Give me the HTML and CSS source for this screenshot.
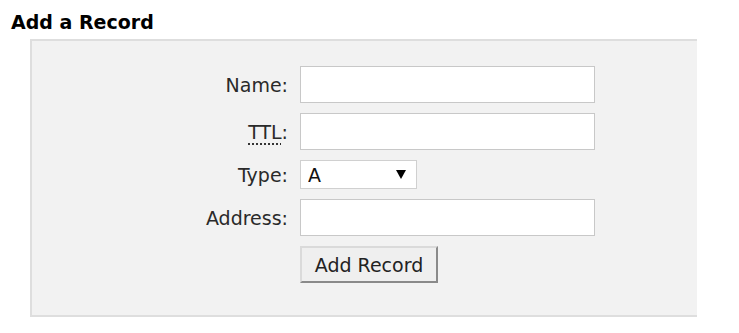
FILE: index.html
```html
<html>
<head>
   <link rel="stylesheet" href="styles.css">
</head>
<body>
   <h3 class="title">Add a Record</h3>
   <form class="record-form" onsubmit="return false;">
      <div class="form-grid">
         <label for="rec-name">Name:</label>
         <input type="text" id="rec-name" class="field">

         <label for="rec-ttl"><abbr title="Time to live">TTL</abbr>:</label>
         <input type="text" id="rec-ttl" class="field">

         <label for="rec-type">Type:</label>
         <div class="select-wrap">
            <select id="rec-type" class="type-select">
               <option>A</option>
               <option>AAAA</option>
               <option>CNAME</option>
               <option>MX</option>
               <option>TXT</option>
            </select>
         </div>

         <label for="rec-address">Address:</label>
         <input type="text" id="rec-address" class="field">

         <span></span>
         <div><button type="submit" class="add-btn">Add Record</button></div>
      </div>
   </form>
</body>
</html>
```

FILE: styles.css
```css
body {
   margin: 0;
   padding: 0 8px 0 11px;
   background-color: #fff;
   color: #222;
   font-family: "DejaVu Sans", Verdana, sans-serif;
   font-size: 19px;
}
.title {
   margin: 11px 0 6px 0;
   font-size: 19px;
   font-weight: bold;
   color: #000;
}
.record-form {
   margin: 0 34px 0 19px;
   padding: 25px 0 32px 136px;
   background-color: #f2f2f2;
   border-top: 2px solid #dedede;
   border-left: 2px solid #dedede;
   border-bottom: 2px solid #dedede;
}
.form-grid {
   display: grid;
   grid-template-columns: 120px auto;
   column-gap: 12px;
   row-gap: 10px;
   align-items: center;
   justify-content: start;
}
.form-grid label {
   text-align: right;
   color: #2a2a2a;
}
abbr {
   text-decoration: underline dotted;
   text-underline-offset: 5px;
}
.field {
   width: 295px;
   height: 37px;
   box-sizing: border-box;
   border: 1px solid #c8c8c8;
   background-color: #fff;
   font-family: inherit;
   font-size: 19px;
   padding: 2px 6px;
}
.select-wrap {
   position: relative;
   width: 117px;
   height: 29px;
}
.type-select {
   -webkit-appearance: none;
   appearance: none;
   width: 117px;
   height: 29px;
   box-sizing: border-box;
   border: 1px solid #d0d0d0;
   border-radius: 0;
   background-color: #fff;
   color: #111;
   font-family: inherit;
   font-size: 19px;
   padding: 0 0 0 7px;
}
.select-wrap::after {
   content: "";
   position: absolute;
   top: 10px;
   left: 96px;
   border-left: 5px solid transparent;
   border-right: 5px solid transparent;
   border-top: 9px solid #000;
   pointer-events: none;
}
.add-btn {
   width: 138px;
   height: 37px;
   box-sizing: border-box;
   background-color: #efefef;
   color: #222;
   font-family: inherit;
   font-size: 19px;
   border-top: 2px solid #dadada;
   border-left: 2px solid #dadada;
   border-right: 2px solid #8a8a8a;
   border-bottom: 2px solid #8a8a8a;
   padding: 0;
   cursor: pointer;
}
```
